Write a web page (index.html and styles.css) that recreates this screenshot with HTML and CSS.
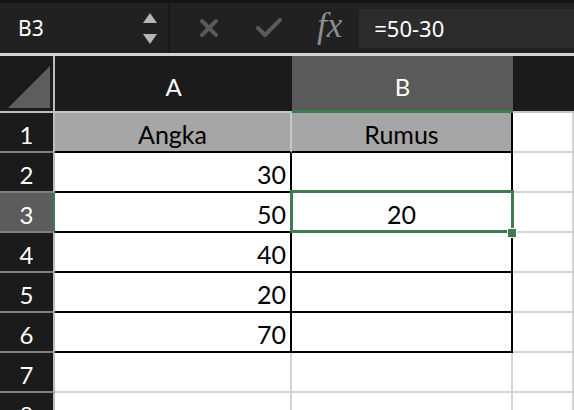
FILE: index.html
```html
<!DOCTYPE html>
<html lang="id">
<head>
    <meta charset="UTF-8">
    <meta name="viewport" content="width=device-width, initial-scale=1.0">
    <title>Rumus Pengurangan</title>
    <link rel="stylesheet" href="styles.css">
</head>
<body>
    <div class="toolbar">
        <div class="name-box">
            <span class="cell-ref">B3</span>
            <div class="spinner">
                <svg width="16" height="34" viewBox="0 0 16 34">
                    <polygon points="8,1 15,11 1,11" fill="#b5b5b5"/>
                    <polygon points="1,22 15,22 8,32" fill="#b5b5b5"/>
                </svg>
            </div>
        </div>
        <div class="formula-tools">
            <svg class="tool-icon cancel" width="20" height="20" viewBox="0 0 20 20">
                <path d="M3 3 L17 17 M17 3 L3 17" stroke="#5a5a5a" stroke-width="4" stroke-linecap="round"/>
            </svg>
            <svg class="tool-icon enter" width="28" height="22" viewBox="0 0 28 22">
                <path d="M3 11 L10 18 L25 3" stroke="#5a5a5a" stroke-width="4" fill="none" stroke-linecap="round" stroke-linejoin="round"/>
            </svg>
            <span class="fx">fx</span>
        </div>
        <div class="formula-input">=50-30</div>
    </div>

    <div class="sheet">
        <div class="corner">
            <svg width="44" height="42" viewBox="0 0 44 42">
                <polygon points="0,42 42,0 42,42" fill="#5e5e5e"/>
            </svg>
        </div>
        <div class="col-head">A</div>
        <div class="col-head active">B</div>
        <div class="col-head"></div>

        <div class="row-head">1</div>
        <div class="cell title col-a first">Angka</div>
        <div class="cell title col-b">Rumus</div>
        <div class="cell"></div>

        <div class="row-head">2</div>
        <div class="cell num col-a">30</div>
        <div class="cell col-b"></div>
        <div class="cell"></div>

        <div class="row-head active">3</div>
        <div class="cell num col-a">50</div>
        <div class="cell col-b center selected">
            20
            <div class="selection"></div>
            <div class="handle"></div>
        </div>
        <div class="cell"></div>

        <div class="row-head">4</div>
        <div class="cell num col-a">40</div>
        <div class="cell col-b"></div>
        <div class="cell"></div>

        <div class="row-head">5</div>
        <div class="cell num col-a">20</div>
        <div class="cell col-b"></div>
        <div class="cell"></div>

        <div class="row-head">6</div>
        <div class="cell num col-a">70</div>
        <div class="cell col-b"></div>
        <div class="cell"></div>

        <div class="row-head">7</div>
        <div class="cell"></div>
        <div class="cell"></div>
        <div class="cell"></div>

        <div class="row-head">8</div>
        <div class="cell"></div>
        <div class="cell"></div>
        <div class="cell"></div>
    </div>
</body>
</html>
```

FILE: styles.css
```css
/* reset */
* {
    margin: 0;
    padding: 0;
    box-sizing: border-box;
}

body {
    width: 574px;
    height: 410px;
    overflow: hidden;
    background: #fff;
    font-family: Lato, "Open Sans", sans-serif;
}

/* formula bar */
.toolbar {
    height: 56px;
    display: flex;
    align-items: center;
    background: #212121;
    border-top: 3px solid #141414;
    border-bottom: 3px solid #d2d2d2;
}

.name-box {
    width: 170px;
    height: 100%;
    display: flex;
    align-items: center;
    justify-content: space-between;
    padding: 0 10px 0 18px;
    border-right: 2px solid #181818;
}

.cell-ref {
    color: #fff;
    font-family: "Noto Sans", sans-serif;
    font-size: 21px;
}

.spinner {
    display: flex;
    padding-top: 2px;
}

.formula-tools {
    display: flex;
    align-items: center;
    height: 100%;
    padding-left: 29px;
}

.cancel {
    margin-right: 36px;
}

.enter {
    margin-right: 34px;
}

.fx {
    color: #8c8c8c;
    font-family: "Liberation Serif", serif;
    font-style: italic;
    font-size: 35px;
    margin-right: 17px;
    padding-bottom: 4px;
}

.formula-input {
    flex: 1;
    height: 39px;
    display: flex;
    align-items: center;
    padding-left: 15px;
    background: #2c2c2c;
    color: #fff;
    font-family: "Noto Sans", sans-serif;
    font-size: 22px;
}

/* grid */
.sheet {
    display: grid;
    grid-template-columns: 55px 237px 221px 1fr;
    grid-template-rows: 57px repeat(8, 40px);
}

.corner {
    background: #1b1b1b;
    border-right: 2px solid #bdbdbd;
    border-bottom: 2px solid #bdbdbd;
    display: flex;
    align-items: flex-end;
    padding: 0 0 3px 8px;
}

.col-head {
    background: #1b1b1b;
    color: #fff;
    font-size: 24px;
    display: flex;
    align-items: center;
    justify-content: center;
    padding-top: 6px;
    border-bottom: 2px solid #c6c6c6;
}

.col-head.active {
    background: #5a5a5a;
    border-bottom: 3px solid #3f7a52;
}

.row-head {
    background: #1b1b1b;
    color: #fff;
    font-size: 24px;
    display: flex;
    align-items: center;
    justify-content: center;
    padding-top: 4px;
    border-right: 2px solid #bdbdbd;
    border-bottom: 2px solid #808080;
}

.row-head.active {
    background: #5c5c5c;
    border-right-color: #3f7a52;
}

.cell {
    color: #000;
    font-size: 25px;
    display: flex;
    align-items: center;
    padding-top: 4px;
    border-right: 2px solid #d4d4d4;
    border-bottom: 2px solid #d4d4d4;
}

.col-a,
.col-b {
    border-bottom-color: #000;
    border-right-color: #000;
}

.col-a.first {
    border-right-color: #c8c8c8;
}

.title {
    background: #a6a6a6;
    justify-content: center;
}

.num {
    justify-content: flex-end;
    padding-right: 4px;
}

.center {
    justify-content: center;
}

.selected {
    position: relative;
}

.selection {
    position: absolute;
    top: -3px;
    left: -2px;
    right: -3px;
    bottom: -2px;
    border: 3px solid #3f7a52;
}

.handle {
    position: absolute;
    right: -6px;
    bottom: -7px;
    width: 10px;
    height: 10px;
    background: #3f7a52;
    border: 1px solid #fff;
}
```
